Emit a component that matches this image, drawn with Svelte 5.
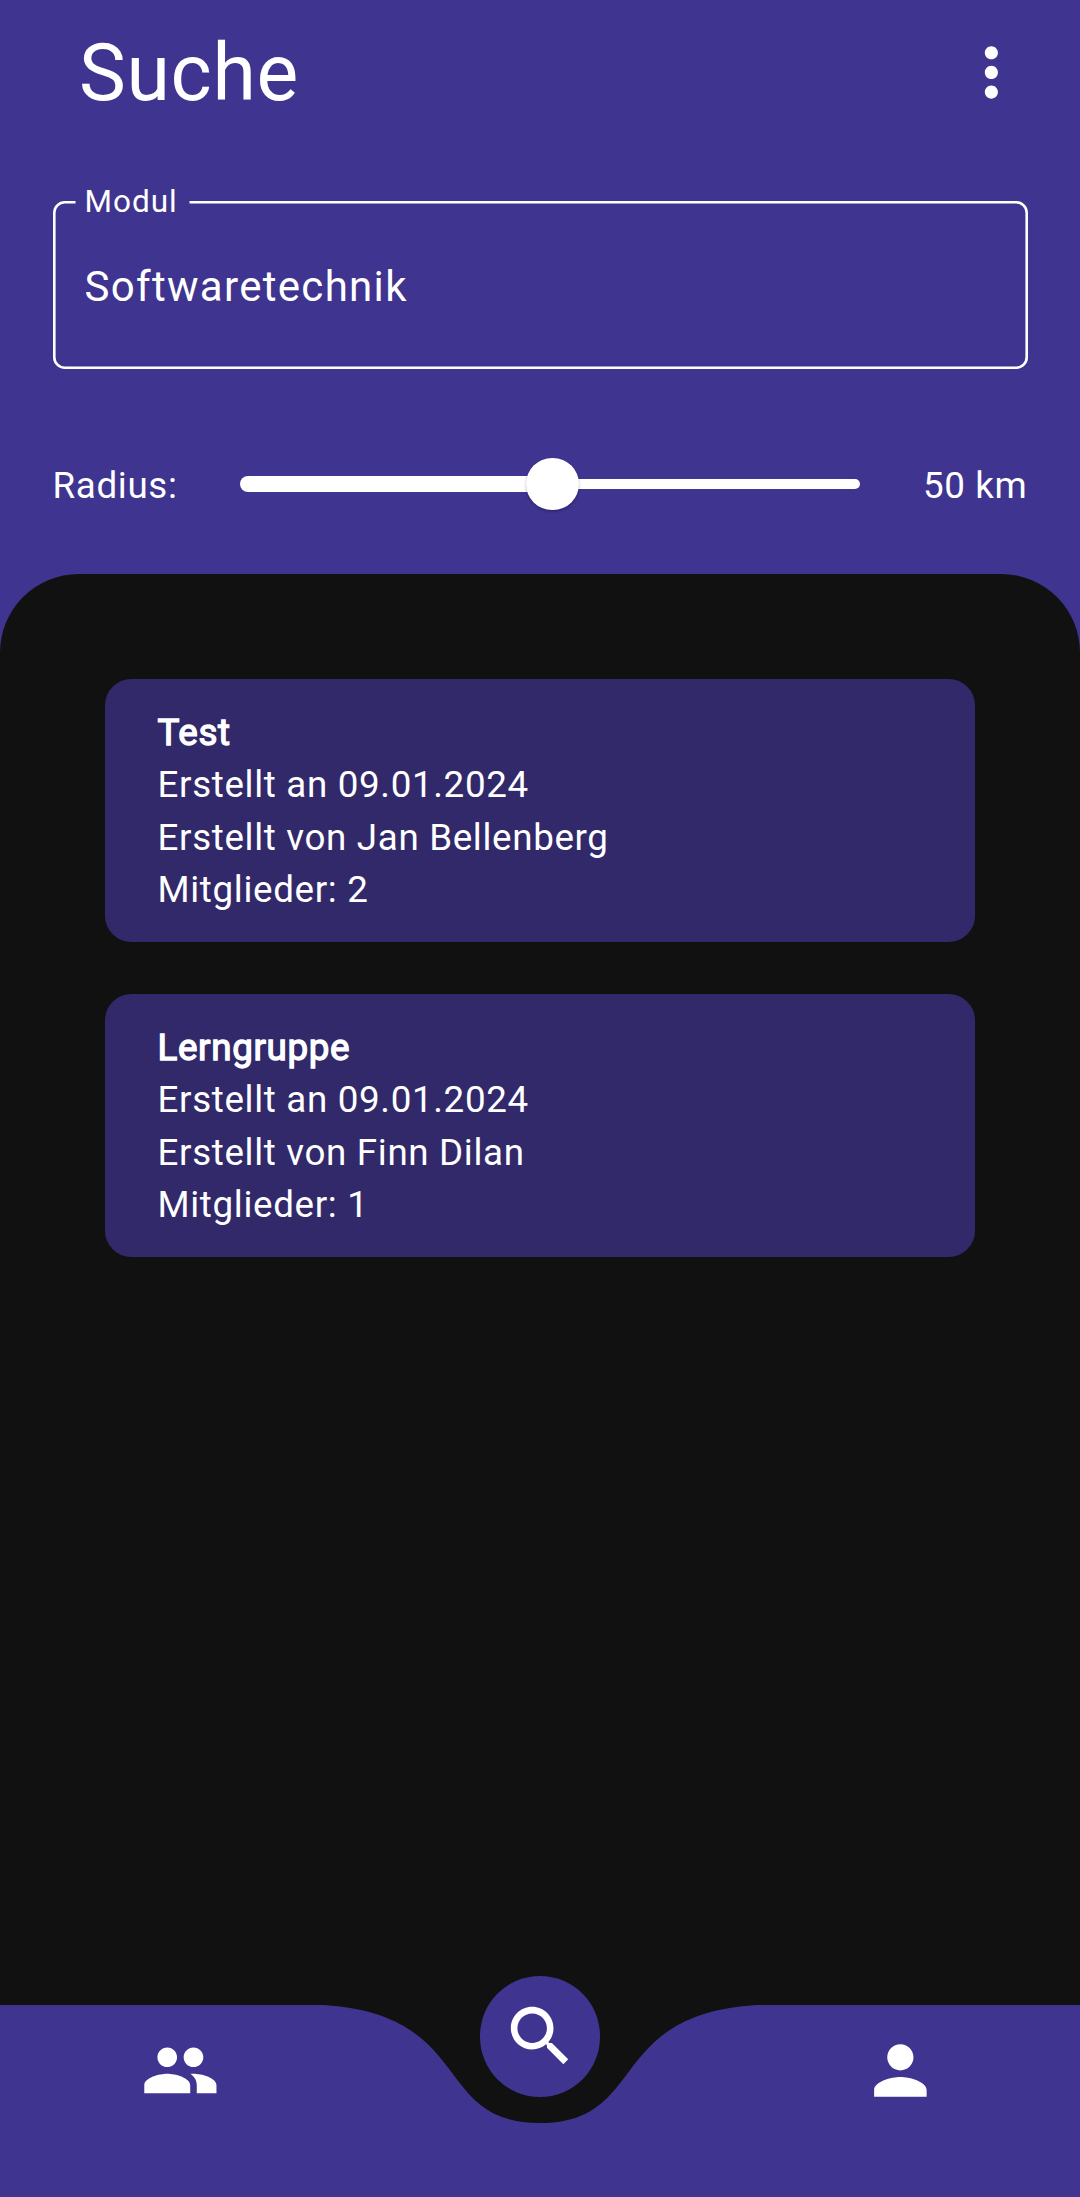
<script>
  const radius = 50;
  const groups = [
    { name: 'Test', date: '09.01.2024', owner: 'Jan Bellenberg', members: 2 },
    { name: 'Lerngruppe', date: '09.01.2024', owner: 'Finn Dilan', members: 1 },
  ];
</script>

<div class="app">
  <header>
    <div class="bar">
      <h1>Suche</h1>
      <svg class="icon" viewBox="0 0 24 24">
        <path d="M12 8c1.1 0 2-.9 2-2s-.9-2-2-2-2 .9-2 2 .9 2 2 2zm0 2c-1.1 0-2 .9-2 2s.9 2 2 2 2-.9 2-2-.9-2-2-2zm0 6c-1.1 0-2 .9-2 2s.9 2 2 2 2-.9 2-2-.9-2-2-2z" />
      </svg>
    </div>

    <div class="field">
      <svg class="outline" viewBox="0 0 975 168">
        <path d="M22.5 1.3H11.8A10.5 10.5 0 0 0 1.3 11.8V156.2A10.5 10.5 0 0 0 11.8 166.7H963.2A10.5 10.5 0 0 0 973.7 156.2V11.8A10.5 10.5 0 0 0 963.2 1.3H136.5" />
      </svg>
      <span class="label">Modul</span>
      <span class="value">Softwaretechnik</span>
    </div>

    <div class="radius">
      <span class="caption">Radius:</span>
      <div class="slider">
        <div class="active" style:width="{radius}%"></div>
        <div class="thumb"></div>
        <div class="inactive"></div>
      </div>
      <span class="amount">{radius} km</span>
    </div>
  </header>

  <main>
    {#each groups as group}
      <article>
        <h2>{group.name}</h2>
        <p>Erstellt an {group.date}</p>
        <p>Erstellt von {group.owner}</p>
        <p>Mitglieder: {group.members}</p>
      </article>
    {/each}
  </main>

  <nav>
    <svg class="wave" viewBox="0 0 1080 192">
      <path d="M0 0H324C475.2 9.85 432 118.1 540 118.1S604.8 9.85 756 0H1080V192H0Z" />
    </svg>
    <div class="tab">
      <svg class="icon" viewBox="0 0 24 24">
        <path d="M16 11c1.66 0 2.99-1.34 2.99-3S17.66 5 16 5c-1.66 0-3 1.34-3 3s1.34 3 3 3zm-8 0c1.66 0 2.99-1.34 2.99-3S9.66 5 8 5C6.34 5 5 6.34 5 8s1.34 3 3 3zm0 2c-2.33 0-7 1.17-7 3.5V19h14v-2.5c0-2.33-4.67-3.5-7-3.5zm8 0c-.29 0-.62.02-.97.05 1.16.84 1.97 1.97 1.97 3.45V19h6v-2.5c0-2.33-4.67-3.5-7-3.5z" />
      </svg>
    </div>
    <div class="tab">
      <div class="fab">
        <svg class="icon" viewBox="0 0 24 24">
          <path d="M15.5 14h-.79l-.28-.27C15.41 12.59 16 11.11 16 9.5 16 5.91 13.09 3 9.5 3S3 5.91 3 9.5 5.91 16 9.5 16c1.61 0 3.09-.59 4.23-1.57l.27.28v.79l5 4.99L20.49 19l-4.99-5zm-6 0C7.01 14 5 11.99 5 9.5S7.01 5 9.5 5 14 7.01 14 9.5 11.99 14 9.5 14z" />
        </svg>
      </div>
    </div>
    <div class="tab">
      <svg class="icon" viewBox="0 0 24 24">
        <path d="M12 12c2.21 0 4-1.79 4-4s-1.79-4-4-4-4 1.79-4 4 1.79 4 4 4zm0 2c-2.67 0-8 1.34-8 4v2h16v-2c0-2.66-5.33-4-8-4z" />
      </svg>
    </div>
  </nav>
</div>

<style>
  .app {
    display: flex;
    flex-direction: column;
    height: 2197px;
    overflow: hidden;
    background: #3f3490;
    color: #fff;
    font-family: Roboto, sans-serif;
  }
  h1, h2, p { margin: 0; font-weight: 400; }
  .icon { display: block; width: 78.75px; height: 78.75px; fill: #fff; }

  header {
    display: flex;
    flex-direction: column;
    box-sizing: border-box;
    height: 573.5px;
    padding: 0 52.5px;
  }
  .bar {
    display: flex;
    align-items: center;
    justify-content: space-between;
    height: 145px;
    margin-right: -3px;
    padding-left: 26.6px;
  }
  h1 { font-size: 78.75px; line-height: 92px; letter-spacing: 0.66px; }

  .field {
    position: relative;
    display: flex;
    align-items: center;
    height: 168px;
    margin-top: 56px;
    padding: 0 32px;
  }
  .outline {
    position: absolute;
    inset: 0;
    width: 100%;
    height: 100%;
    fill: none;
    stroke: #fff;
    stroke-width: 2.6;
  }
  .label {
    position: absolute;
    top: -18px;
    left: 32px;
    font-size: 31.5px;
    line-height: 37px;
    letter-spacing: 0.98px;
  }
  .value { padding-top: 2px; font-size: 42px; letter-spacing: 1.31px; }

  .radius {
    display: flex;
    align-items: center;
    height: 52.5px;
    margin-top: 88.5px;
    font-size: 36.75px;
    letter-spacing: 0.66px;
  }
  .caption { width: 187.5px; padding-top: 3px; }
  .slider {
    display: flex;
    align-items: center;
    width: 619.5px;
  }
  .active {
    box-sizing: border-box;
    height: 15.75px;
    margin-right: -23.5px;
    border-radius: 8px 0 0 8px;
    background: #fff;
  }
  .thumb {
    position: relative;
    width: 52.5px;
    height: 52.5px;
    border-radius: 50%;
    background: #fff;
    box-shadow: 0 2px 3px rgba(0, 0, 0, 0.22), 0 0 1px rgba(0, 0, 0, 0.2);
  }
  .inactive {
    flex: 1;
    height: 10.5px;
    margin-left: -4px;
    border-radius: 0 5.25px 5.25px 0;
    background: #fff;
  }
  .amount { margin-left: auto; padding-top: 3px; }

  main {
    display: flex;
    flex: 1;
    flex-direction: column;
    gap: 52.5px;
    padding: 105.5px 105px 0;
    border-radius: 78.75px 78.75px 0 0;
    background: #111;
  }
  article {
    padding: 27.75px 52.5px 24.75px;
    border-radius: 26.25px;
    background: #32296b;
    font-size: 36.75px;
    line-height: 52.5px;
    letter-spacing: 0.66px;
  }
  h2 {
    font-size: inherit;
    -webkit-text-stroke: 1.3px #fff;
  }

  nav {
    position: relative;
    display: grid;
    grid-template-columns: repeat(3, 1fr);
    height: 192px;
    background: #111;
  }
  .wave {
    position: absolute;
    inset: 0;
    width: 1080px;
    height: 192px;
    fill: #3f3490;
  }
  .tab {
    position: relative;
    display: flex;
    justify-content: center;
    align-items: flex-start;
    padding-top: 25.6px;
  }
  .fab {
    display: flex;
    align-items: center;
    justify-content: center;
    width: 120.75px;
    height: 120.75px;
    margin-top: -54.6px;
    border-radius: 50%;
    background: #3f3490;
  }
</style>
